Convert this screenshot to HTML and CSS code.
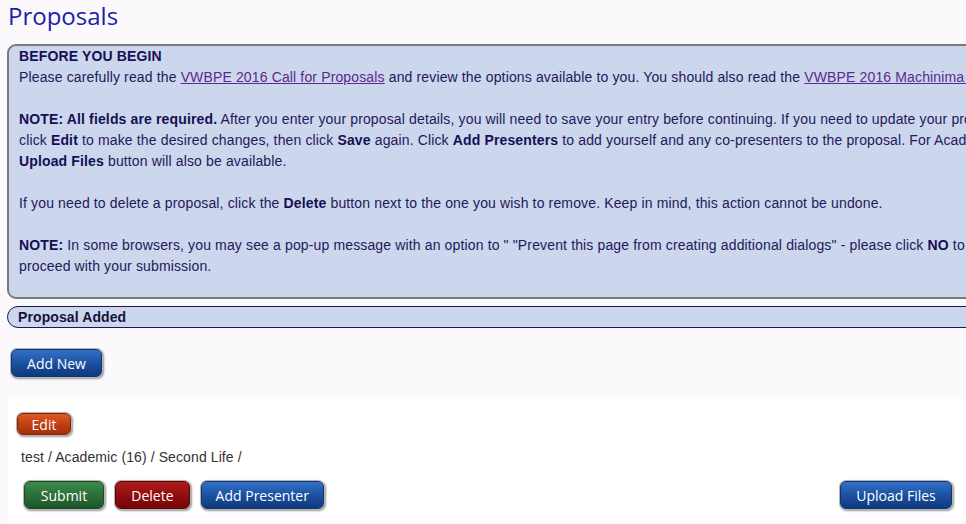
FILE: index.html
```html
<!DOCTYPE html>
<html>
<head>
    <title>Proposals</title>
    <link rel="stylesheet" href="styles.css">
</head>
<body>
    <div class="page">
        <h1>Proposals</h1>

        <div class="notice">
            <p><strong>BEFORE YOU BEGIN</strong><br>
            Please carefully read the <a href="#">VWBPE 2016 Call for Proposals</a> and review the options available to you. You should also read the <a href="#">VWBPE 2016 Machinima and Art Guidelines</a> before submitting.</p>

            <p><strong>NOTE: All fields are required.</strong> After you enter your proposal details, you will need to save your entry before continuing. If you need to update your proposal,<br>
            click <strong>Edit</strong> to make the desired changes, then click <strong>Save</strong> again. Click <strong>Add Presenters</strong> to add yourself and any co-presenters to the proposal. For Academic proposals, the<br>
            <strong>Upload Files</strong> button will also be available.</p>

            <p>If you need to delete a proposal, click the <strong>Delete</strong> button next to the one you wish to remove. Keep in mind, this action cannot be undone.</p>

            <p class="last"><strong>NOTE:</strong> In some browsers, you may see a pop-up message with an option to " "Prevent this page from creating additional dialogs" - please click <strong>NO</strong> to this option or you will not be able to<br>
            proceed with your submission.</p>
        </div>

        <div class="added">Proposal Added</div>

        <div class="add-row">
            <button class="btn blue btn-add">Add New</button>
        </div>

        <div class="entry">
            <button class="btn orange btn-edit">Edit</button>
            <div class="summary">test / Academic (16) / Second Life /</div>
            <div class="actions">
                <button class="btn green">Submit</button>
                <button class="btn red">Delete</button>
                <button class="btn blue">Add Presenter</button>
                <button class="btn blue right">Upload Files</button>
            </div>
        </div>
    </div>
</body>
</html>
```

FILE: styles.css
```css
html { overflow-x: hidden; }
body { margin: 0; background: #fbf9fb; font-family: "Liberation Sans", Arial, sans-serif; font-size: 14px; }
.page { width: 1300px; min-height: 524px; }
h1 { margin: 0; padding: 2px 0 0 8px; height: 42px; font-family: "Open Sans", sans-serif; font-weight: normal; font-size: 24px; line-height: 28px; color: #1d1dab; }

.notice { margin-left: 7px; width: 1270px; border: 2px solid #7a7a7a; border-radius: 9px; background: #ccd6ec; padding: 0 10px; color: #24195a; line-height: 21px; letter-spacing: 0.14px; }
.notice p { margin: 0 0 21px; white-space: nowrap; }
.notice p.last { margin-bottom: 20px; }
.notice strong { color: #160f55; }
.notice a { color: #5a2a8c; }

.added { margin: 7px 0 0 7px; width: 1280px; height: 20px; border: 1px solid #1c1660; border-radius: 11px; background: #ccd6ec; padding-left: 10px; font-weight: bold; line-height: 20px; color: #16123a; letter-spacing: 0.1px; }

.add-row { padding: 21px 0 22px 11px; }

.btn { font-family: "Open Sans", sans-serif; font-size: 14px; color: #fff; border: 1px solid #333; border-radius: 6px; padding: 0 12px; height: 28px; box-shadow: 0 0 0 1px #b5b5b5, 1px 1px 2px 1px #999; cursor: pointer; }
.blue { background: linear-gradient(#3372c8, #1a4e9d 55%, #0f3a7d); border-color: #123470; }
.green { background: linear-gradient(#3d8c4b, #2a6d37 55%, #1d5528); border-color: #1a4a22; }
.red { background: linear-gradient(#b01b1b, #8e0c0c 55%, #760606); border-color: #5a0505; }
.orange { background: linear-gradient(#dd5a22, #bf3d12 55%, #a3300c); border-color: #7a250a; }

.btn-add { width: 91px; }

.entry { margin-left: 8px; width: 958px; background: #fff; padding: 14px 0 12px; }
.btn-edit { margin-left: 9px; height: 22px; width: 54px; padding: 0; }
.summary { padding: 12px 0 0 13px; height: 24px; line-height: 20px; color: #333; letter-spacing: 0.1px; }
.actions { padding: 10px 0 0 16px; }
.actions .btn { margin-right: 7px; }
.actions .green { width: 80px; }
.actions .red { width: 75px; }
.actions .blue { width: 123px; }
.actions .right { float: right; margin-right: 14px; width: 112px; }
```
